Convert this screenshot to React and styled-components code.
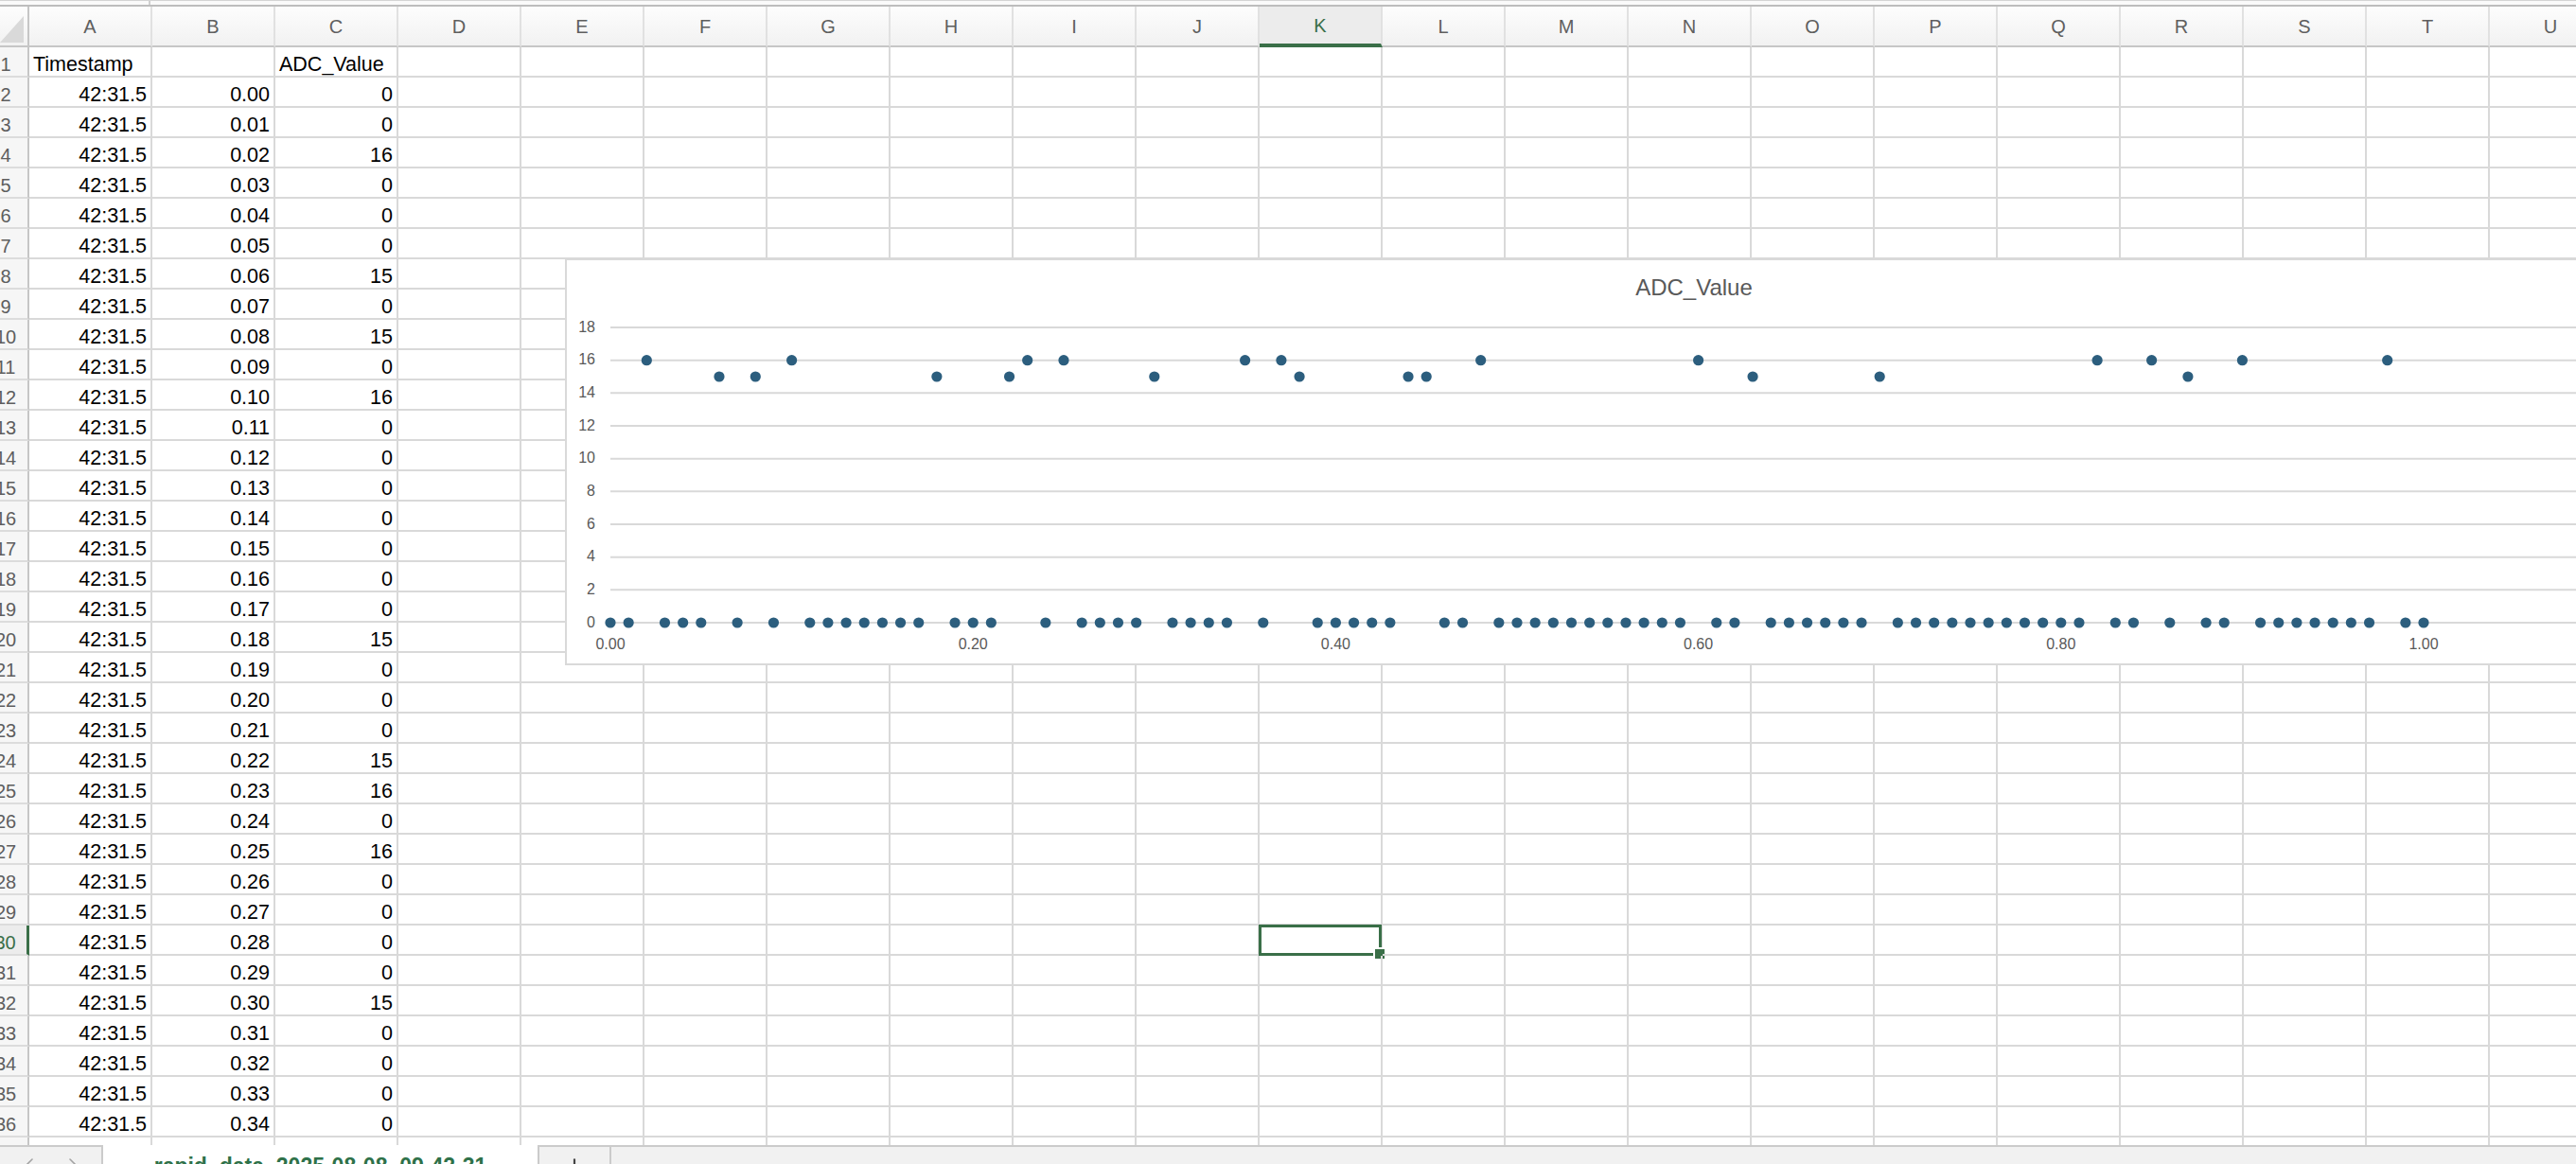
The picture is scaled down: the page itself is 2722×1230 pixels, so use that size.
import React from "react";
import styled, { createGlobalStyle } from "styled-components";
import { ChevronLeft, ChevronRight, Plus } from "lucide-react";

const FONT = `"Liberation Sans", Arial, sans-serif`;
const GRID = "#d9d9d9";
const HEAD_LINE = "#c6c6c6";
const GREEN = "#3a6f48";
const COLS = "ABCDEFGHIJKLMNOPQRSTUV".split("");
const SELECTED_COL = "K";
const SELECTED_ROW = 30;
const ROW_COUNT = 37;

// ADC samples every 0.01 s, anything not listed reads 0
const highs = {
  2: 16, 6: 15, 8: 15, 10: 16, 18: 15, 22: 15, 23: 16, 25: 16, 30: 15,
  35: 16, 37: 16, 38: 15, 44: 15, 45: 15, 48: 16, 60: 16, 63: 15, 70: 15,
  82: 16, 85: 16, 87: 15, 90: 16, 98: 16,
};
const samples = Array.from({ length: 101 }, (_, i) => ({ t: i / 100, v: highs[i] || 0 }));

const GlobalStyle = createGlobalStyle`
  html, body {
    margin: 0;
    padding: 0;
    background: #fff;
    overflow: hidden;
  }
  body {
    font-family: ${FONT};
  }
`;

const Window = styled.div`
  width: 2722px;
  height: 1230px;
  overflow: hidden;
  display: flex;
  flex-direction: column;
  background: #fff;
`;

const FormulaEdge = styled.div`
  flex: none;
  height: 7px;
  box-sizing: border-box;
  display: flex;
  border-top: 1px solid #d4d4d4;
  border-bottom: 2px solid #bdbdbd;
  background: #fafafa;
`;

const EdgePart = styled.div`
  width: ${(p) => p.$w}px;
  border-right: 2px solid #d0d0d0;
`;

const Sheet = styled.div`
  position: relative;
  flex: none;
  height: 1203px;
  overflow: hidden;
`;

const Grid = styled.div`
  margin-left: -17px;
  width: max-content;
`;

const HeaderRow = styled.div`
  display: grid;
  grid-template-columns: 48px repeat(${COLS.length}, 130px);
  height: 43px;
  background: linear-gradient(#fdfdfd, #f1f1f1);
`;

const Corner = styled.div`
  position: relative;
  box-sizing: border-box;
  border-right: 2px solid ${HEAD_LINE};
  border-bottom: 2px solid ${HEAD_LINE};
`;

const CornerMark = styled.span`
  position: absolute;
  left: 17px;
  top: 10px;
  width: 25px;
  height: 28px;
  background: #d9d9d9;
  clip-path: polygon(0 100%, 100% 0, 100% 100%);
`;

const ColHead = styled.div`
  box-sizing: border-box;
  display: flex;
  align-items: center;
  justify-content: center;
  padding-top: 2px;
  font-size: 20px;
  color: ${(p) => (p.$active ? GREEN : "#5f5f5f")};
  border-right: 2px solid #e1e1e1;
  border-bottom: ${(p) => (p.$active ? `4px solid ${GREEN}` : `2px solid ${HEAD_LINE}`)};
  background: ${(p) => (p.$active ? "#ececec" : "transparent")};
`;

const Row = styled.div`
  display: grid;
  grid-template-columns: 48px repeat(${COLS.length}, 130px);
  height: 32px;
`;

const RowHead = styled.div`
  box-sizing: border-box;
  padding-top: 6px;
  line-height: 24px;
  text-align: center;
  font-size: 20px;
  color: ${(p) => (p.$active ? GREEN : "#5e5e5e")};
  background: ${(p) => (p.$active ? "#ececec" : "#f6f6f6")};
  border-bottom: 2px solid #dcdcdc;
  border-right: ${(p) => (p.$active ? `3px solid ${GREEN}` : `2px solid ${HEAD_LINE}`)};
`;

const Cell = styled.div`
  position: relative;
  box-sizing: border-box;
  padding: 6px 4px 0;
  line-height: 24px;
  font-size: 21.5px;
  color: #000;
  white-space: nowrap;
  text-align: ${(p) => p.$align || "left"};
  border-right: 2px solid ${GRID};
  border-bottom: 2px solid ${GRID};
`;

const Selection = styled.div`
  position: absolute;
  left: -1px;
  top: -1px;
  right: -1px;
  bottom: -2px;
  border: 3px solid ${GREEN};
  pointer-events: none;
`;

const FillHandle = styled.span`
  position: absolute;
  right: -6px;
  bottom: -6px;
  width: 10px;
  height: 10px;
  background: ${GREEN};
  box-shadow: 0 0 0 2px #fff;
`;

const ChartFrame = styled.div`
  position: absolute;
  left: 597px;
  top: 266px;
  width: 2386px;
  height: 430px;
  box-sizing: border-box;
  display: flex;
  flex-direction: column;
  border: 2px solid #d9d9d9;
  background: #fff;
  z-index: 2;
`;

const ChartTitle = styled.div`
  flex: none;
  height: 58px;
  line-height: 58px;
  text-align: center;
  font-size: 24px;
  color: #595959;
`;

const Plot = styled.svg`
  display: block;
  flex: none;
  font-family: ${FONT};
`;

const TabBar = styled.div`
  flex: none;
  display: flex;
  height: 44px;
  box-sizing: border-box;
  border-top: 2px solid #cbcbcb;
  background: #f1f1f1;
`;

const TabNav = styled.div`
  width: 107px;
  display: flex;
  justify-content: center;
  gap: 22px;
  padding-top: 7px;
  color: #a3a3a3;
`;

const SheetTab = styled.div`
  width: 463px;
  box-sizing: border-box;
  margin-top: -2px;
  padding-top: 10px;
  line-height: 24px;
  text-align: center;
  font-size: 23px;
  font-weight: 700;
  color: #2e7149;
  background: #fff;
  border-left: 2px solid #cbcbcb;
  border-right: 2px solid #cbcbcb;
`;

const AddTab = styled.div`
  width: 76px;
  box-sizing: border-box;
  display: flex;
  justify-content: center;
  padding-top: 8px;
  color: #444;
  border-right: 2px solid #cbcbcb;
`;

// plot geometry (svg coords)
const X0 = 46;
const PX = 1916;
const Y0 = 325;
const PY = 17.333;
const X_MAX = 1.2;
const sx = (t) => X0 + t * PX;
const sy = (v) => Y0 - v * PY;

const ScatterChart = () => {
  const yTicks = [0, 2, 4, 6, 8, 10, 12, 14, 16, 18];
  const xTicks = [0, 0.2, 0.4, 0.6, 0.8, 1.0, 1.2];
  return (
    <ChartFrame>
      <ChartTitle>ADC_Value</ChartTitle>
      <Plot width="2382" height="368" viewBox="0 0 2382 368">
        {yTicks.map((v) => (
          <g key={v}>
            <line x1={X0} x2={sx(X_MAX)} y1={sy(v)} y2={sy(v)} stroke="#d9d9d9" strokeWidth="2" />
            <text x="30" y={sy(v) - 1} textAnchor="end" dominantBaseline="central" fontSize="16" fill="#595959">
              {v}
            </text>
          </g>
        ))}
        {xTicks.map((t) => (
          <text key={t} x={sx(t)} y="347" textAnchor="middle" dominantBaseline="central" fontSize="16" fill="#595959">
            {t.toFixed(2)}
          </text>
        ))}
        {samples.map((s) => (
          <circle key={s.t} cx={sx(s.t)} cy={sy(s.v)} r="5.6" fill="#2c5e7e" />
        ))}
      </Plot>
    </ChartFrame>
  );
};

const cellContent = (row, col) => {
  if (row === 1) {
    if (col === "A") return ["Timestamp", "left"];
    if (col === "C") return ["ADC_Value", "left"];
    return ["", "left"];
  }
  const i = row - 2;
  if (col === "A") return ["42:31.5", "right"];
  if (col === "B") return [(i / 100).toFixed(2), "right"];
  if (col === "C") return [String(samples[i].v), "right"];
  return ["", "left"];
};

const App = () => {
  const rows = Array.from({ length: ROW_COUNT }, (_, i) => i + 1);
  return (
    <Window>
      <GlobalStyle />
      <FormulaEdge>
        <EdgePart $w={157} />
      </FormulaEdge>

      <Sheet>
        <Grid>
          <HeaderRow>
            <Corner>
              <CornerMark />
            </Corner>
            {COLS.map((c) => (
              <ColHead key={c} $active={c === SELECTED_COL}>
                {c}
              </ColHead>
            ))}
          </HeaderRow>

          {rows.map((r) => (
            <Row key={r}>
              <RowHead $active={r === SELECTED_ROW}>{r}</RowHead>
              {COLS.map((c) => {
                const [text, align] = cellContent(r, c);
                const selected = r === SELECTED_ROW && c === SELECTED_COL;
                return (
                  <Cell key={c} $align={align}>
                    {text}
                    {selected && (
                      <Selection>
                        <FillHandle />
                      </Selection>
                    )}
                  </Cell>
                );
              })}
            </Row>
          ))}
        </Grid>

        <ScatterChart />
      </Sheet>

      <TabBar>
        <TabNav>
          <ChevronLeft size={24} strokeWidth={1.6} />
          <ChevronRight size={24} strokeWidth={1.6} />
        </TabNav>
        <SheetTab>rapid_data_2025-08-08_09-42-31</SheetTab>
        <AddTab>
          <Plus size={26} strokeWidth={2} />
        </AddTab>
      </TabBar>
    </Window>
  );
};

export default App;
